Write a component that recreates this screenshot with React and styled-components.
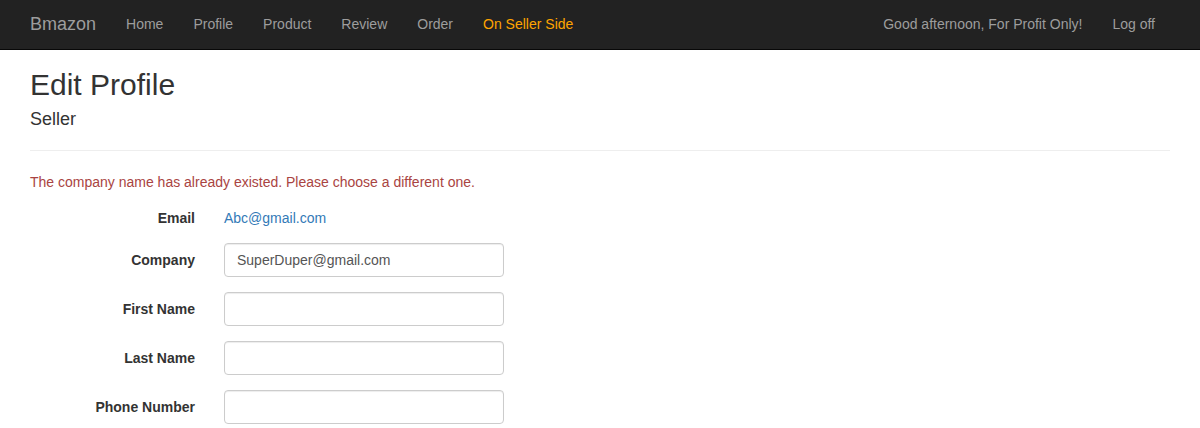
import React from "react";
import styled, { createGlobalStyle } from "styled-components";

const Global = createGlobalStyle`
  * { box-sizing: border-box; }
  html, body { margin: 0; padding: 0; background: #fff; }
  body {
    font-family: "Liberation Sans", Arial, Helvetica, sans-serif;
    font-size: 14px;
    line-height: 20px;
    color: #333;
  }
`;

const Navbar = styled.nav`
  height: 50px;
  background: #222;
  border-bottom: 1px solid #080808;
`;

const NavInner = styled.div`
  width: 1170px;
  margin: 0 auto;
  padding: 0 15px;
  display: flex;
  align-items: stretch;
  height: 49px;
`;

const Brand = styled.a`
  margin-left: -15px;
  padding: 14px 15px 15px;
  font-size: 18px;
  line-height: 20px;
  color: #9d9d9d;
  text-decoration: none;
`;

const NavList = styled.ul`
  list-style: none;
  margin: 0;
  padding: 0;
  display: flex;
  margin-left: ${(p) => (p.$right ? "auto" : "0")};
`;

const NavLink = styled.a`
  display: block;
  padding: 14px 15px 15px;
  line-height: 20px;
  color: ${(p) => (p.$active ? "#ffa500" : "#9d9d9d")};
  text-decoration: none;
`;

const Container = styled.main`
  width: 1170px;
  margin: 0 auto;
  padding: 0 15px;
`;

const Title = styled.h2`
  margin: 18px 0 0;
  font-size: 30px;
  font-weight: 500;
  line-height: 33px;
  color: #333;
`;

const Subtitle = styled.h4`
  margin: 8px 0 0;
  font-size: 18px;
  font-weight: 500;
  line-height: 20px;
  color: #333;
`;

const Rule = styled.hr`
  margin: 21px 0 0;
  border: 0;
  border-top: 1px solid #eee;
  height: 0;
`;

const ErrorText = styled.p`
  margin: 21px 0 0;
  color: #a94442;
`;

const Form = styled.form`
  margin-top: 9px;
  display: flex;
  flex-direction: column;
  gap: 15px;
`;

const Group = styled.div`
  display: grid;
  grid-template-columns: 195px 1fr;
  margin: 0 -15px;
  min-height: ${(p) => (p.$static ? "27px" : "34px")};
`;

const Label = styled.label`
  padding: 7px 15px 0;
  text-align: right;
  font-weight: bold;
  color: #333;
`;

const Field = styled.div`
  padding: 0 15px 0 14px;
`;

const Static = styled.a`
  display: block;
  padding-top: 7px;
  color: #337ab7;
  text-decoration: none;
`;

const Input = styled.input`
  display: block;
  width: 280px;
  height: 34px;
  padding: 6px 12px;
  font-family: inherit;
  font-size: 14px;
  line-height: 20px;
  color: #555;
  background: #fff;
  border: 1px solid #ccc;
  border-radius: 4px;
  box-shadow: inset 0 1px 1px rgba(0, 0, 0, 0.075);
  outline: none;
`;

const navItems = ["Home", "Profile", "Product", "Review", "Order"];

const fields = [
  { label: "Company", value: "SuperDuper@gmail.com" },
  { label: "First Name", value: "" },
  { label: "Last Name", value: "" },
  { label: "Phone Number", value: "" },
];

export default function App() {
  return (
    <>
      <Global />
      <Navbar>
        <NavInner>
          <Brand href="#">Bmazon</Brand>
          <NavList>
            {navItems.map((n) => (
              <li key={n}>
                <NavLink href="#">{n}</NavLink>
              </li>
            ))}
            <li>
              <NavLink href="#" $active>
                On Seller Side
              </NavLink>
            </li>
          </NavList>
          <NavList $right>
            <li>
              <NavLink href="#">Good afternoon, For Profit Only!</NavLink>
            </li>
            <li>
              <NavLink href="#">Log off</NavLink>
            </li>
          </NavList>
        </NavInner>
      </Navbar>
      <Container>
        <Title>Edit Profile</Title>
        <Subtitle>Seller</Subtitle>
        <Rule />
        <ErrorText>
          The company name has already existed. Please choose a different one.
        </ErrorText>
        <Form onSubmit={(e) => e.preventDefault()}>
          <Group $static>
            <Label>Email</Label>
            <Field>
              <Static href="#">Abc@gmail.com</Static>
            </Field>
          </Group>
          {fields.map((f) => (
            <Group key={f.label}>
              <Label>{f.label}</Label>
              <Field>
                <Input type="text" defaultValue={f.value} />
              </Field>
            </Group>
          ))}
        </Form>
      </Container>
    </>
  );
}
